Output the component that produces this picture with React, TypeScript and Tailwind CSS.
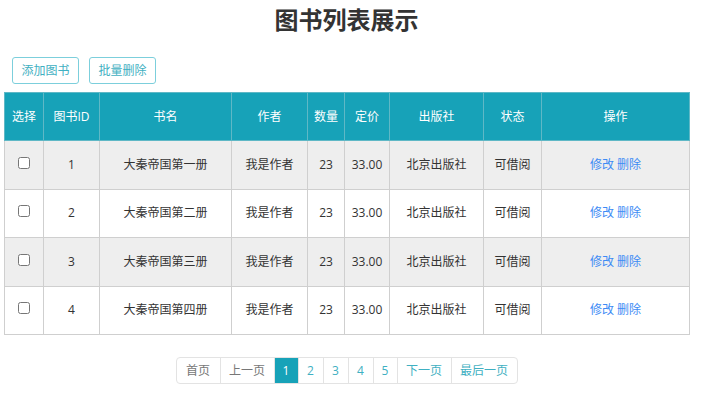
import React from "react";

const books = [
  { id: 1, name: "大秦帝国第一册" },
  { id: 2, name: "大秦帝国第二册" },
  { id: 3, name: "大秦帝国第三册" },
  { id: 4, name: "大秦帝国第四册" },
];

const cols = [
  { title: "选择", w: "w-[39px]" },
  { title: "图书ID", w: "w-[56px]" },
  { title: "书名", w: "w-[132px]" },
  { title: "作者", w: "w-[76px]" },
  { title: "数量", w: "w-[37px]" },
  { title: "定价", w: "w-[45px]" },
  { title: "出版社", w: "w-[94px]" },
  { title: "状态", w: "w-[58px]" },
  { title: "操作", w: "w-[148px]" },
];

const pages = [
  { label: "首页", w: "w-[43px]" },
  { label: "上一页", w: "w-[54px]" },
  { label: "1", w: "w-[24px]" },
  { label: "2", w: "w-[25px]" },
  { label: "3", w: "w-[25px]" },
  { label: "4", w: "w-[25px]" },
  { label: "5", w: "w-[24px]" },
  { label: "下一页", w: "w-[54px]" },
  { label: "最后一页", w: "w-[66px]" },
];

export default function App() {
  return (
    <div className="min-h-[396px] bg-white px-1 font-['Open_Sans','Noto_Sans_CJK_SC',sans-serif] text-[#333]">
      <div className="w-[685px]">
        <h1 className="pt-[5px] text-center text-[24px] font-bold leading-[28px] font-['Noto_Sans_CJK_SC',sans-serif]">
          图书列表展示
        </h1>

        <div className="mt-[24px] flex gap-[10px] pl-[8px]">
          <button className="h-[27px] w-[67px] rounded-[3px] border border-[#7ccfdc] text-[12px] text-[#3fb0c2]">
            添加图书
          </button>
          <button className="h-[27px] w-[67px] rounded-[3px] border border-[#7ccfdc] text-[12px] text-[#3fb0c2]">
            批量删除
          </button>
        </div>

        <table className="mt-[8px] w-[685px] table-fixed border-collapse border border-[#cfcfcf] text-[12px]">
          <thead>
            <tr className="h-[48px] bg-[#17a2b8] text-white">
              {cols.map((c) => (
                <th key={c.title} className={`${c.w} border border-[#5fb8c6] font-normal`}>
                  {c.title}
                </th>
              ))}
            </tr>
          </thead>
          <tbody>
            {books.map((b, i) => (
              <tr key={b.id} className={`h-[48.5px] text-center ${i % 2 === 0 ? "bg-[#eeeeee]" : "bg-white"}`}>
                <td className="border border-[#cfcfcf] align-middle">
                  <input type="checkbox" className="-mt-[6px] h-[12px] w-[12px] align-middle" />
                </td>
                <td className="border border-[#cfcfcf]">{b.id}</td>
                <td className="border border-[#cfcfcf]">{b.name}</td>
                <td className="border border-[#cfcfcf]">我是作者</td>
                <td className="border border-[#cfcfcf]">23</td>
                <td className="border border-[#cfcfcf]">33.00</td>
                <td className="border border-[#cfcfcf]">北京出版社</td>
                <td className="border border-[#cfcfcf]">可借阅</td>
                <td className="border border-[#cfcfcf]">
                  <a className="text-[#3d8bf5]">修改</a> <a className="text-[#3d8bf5]">删除</a>
                </td>
              </tr>
            ))}
          </tbody>
        </table>

        <div className="flex justify-center pt-[22px]">
          <ul className="flex h-[27px] overflow-hidden rounded-[4px] border border-[#e3e3e3] text-[12px]">
            {pages.map((p, i) => {
              const active = p.label === "1";
              const disabled = i < 2;
              return (
                <li
                  key={p.label}
                  className={`flex items-center justify-center border-l border-[#e3e3e3] first:border-l-0 ${p.w} ${
                    active ? "bg-[#17a2b8] text-white" : disabled ? "text-[#777]" : "text-[#3fb0c2]"
                  }`}
                >
                  {p.label}
                </li>
              );
            })}
          </ul>
        </div>
      </div>
    </div>
  );
}
